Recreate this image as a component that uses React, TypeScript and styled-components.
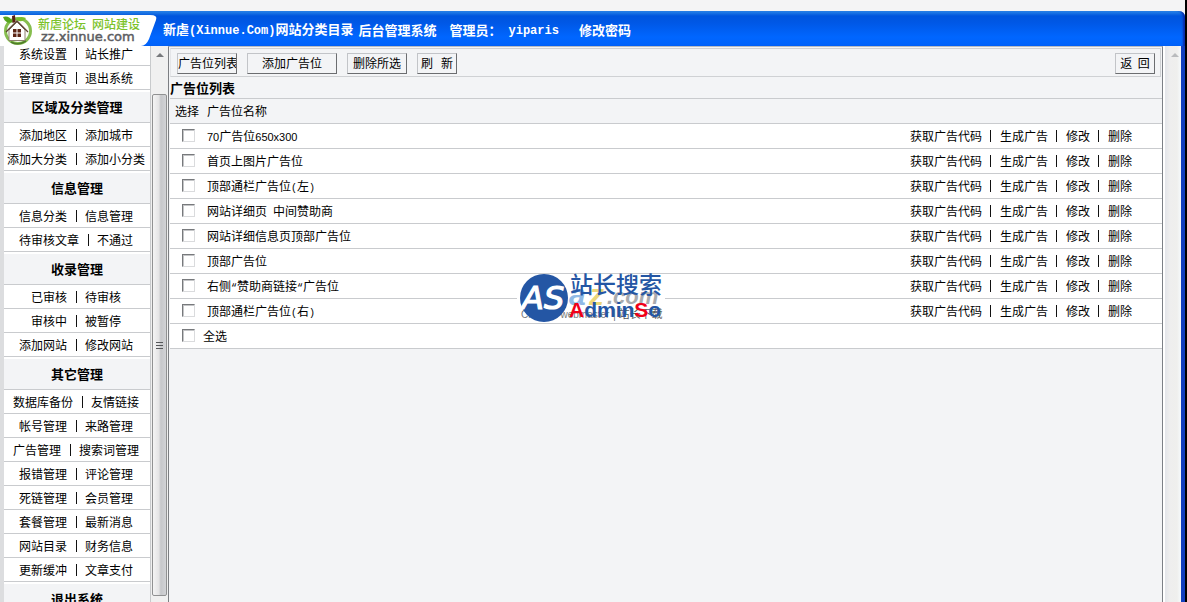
import React from "react";
import styled, { createGlobalStyle, css } from "styled-components";

const GlobalStyle = createGlobalStyle`
  *, *::before, *::after { box-sizing: border-box; }
  body {
    margin: 0;
    background: #f3f4f6;
    color: #000;
    font: 12px/16px "Noto Sans CJK SC", "Liberation Sans", sans-serif;
    overflow: hidden;
  }
  a { color: inherit; text-decoration: none; }
`;

const Screen = styled.div`
  display: flex;
  height: 100vh;
  background: #000;
  padding-right: 2px;
`;

const Frame = styled.div`
  flex: 1;
  min-width: 0;
  display: flex;
  flex-direction: column;
  background: #f3f4f6;
`;

const TopStrip = styled.div`
  flex: none;
  height: 11px;
  background: #f4f4f5;
`;

const Header = styled.header`
  flex: none;
  display: flex;
  align-items: flex-end;
  height: 35px;
  border-top-right-radius: 6px;
  background: linear-gradient(#2a86e8 0, #0055dd 5px, #0058e6 12px, #0066ff 26px, #0062fa 100%);
  box-shadow: inset -3px 0 2px -1px #0a2ca8;
`;

const Brand = styled.a`
  flex: none;
  width: 158px;
  height: 32px;
  svg { display: block; }
`;

const HeaderText = styled.div`
  display: flex;
  align-items: center;
  height: 32px;
  margin-left: 5px;
  color: #fff;
  font-size: 13px;
  font-weight: 700;
  white-space: pre;
`;

const HeaderLatin = styled.span`
  font: 700 12px/16px "Liberation Mono", monospace;
`;

const HeaderItem = styled.span<{ $gap: number }>`
  margin-left: ${(p) => p.$gap}px;
`;

const Body = styled.div`
  flex: 1;
  min-height: 0;
  display: flex;
  border-right: 4px solid #123fbe;
`;

const Sidebar = styled.nav`
  flex: none;
  width: 151px;
  overflow: hidden;
  border-left: 4px solid #dcdddf;
  border-right: 1px solid #c8cacc;
  background: #fff;
`;

const MenuList = styled.div`
  margin-top: -4px;
`;

const line = css`border-bottom: 1px solid #c9cbce;`;

const MenuRow = styled.div`
  ${line}
  height: 24px;
  display: flex;
  justify-content: center;
  align-items: center;
  padding-right: 2px;
  white-space: nowrap;
  background: #fff;
`;

const MenuHeading = styled.h2`
  ${line}
  margin: 0;
  height: 33px;
  display: flex;
  justify-content: center;
  align-items: center;
  border-top: 2px solid #fff;
  background: #f3f4f6;
  font-size: 13px;
  font-weight: 700;
`;

const Bar = styled.span`
  display: inline-flex;
  justify-content: center;
  width: 18px;
  &::before {
    content: "";
    width: 1px;
    height: 12px;
    background: #111;
  }
`;

const SideScroll = styled.div`
  flex: none;
  width: 17px;
  padding: 0 1px 6px;
  display: flex;
  flex-direction: column;
  background: #f0f0f0;
`;

const ArrowUp = styled.span<{ $color: string }>`
  align-self: center;
  margin-top: 7px;
  border: 4px solid transparent;
  border-top: 0;
  border-bottom: 4px solid ${(p) => p.$color};
`;

const Thumb = styled.div`
  flex: 1;
  margin-top: 37px;
  display: flex;
  flex-direction: column;
  align-items: center;
  justify-content: center;
  gap: 2px;
  border: 1px solid #909192;
  border-radius: 2px;
  background: linear-gradient(90deg, #f4f4f4, #e4e4e5 45%, #c6c7ca 60%, #d2d3d6);
`;

const Grip = styled.i`
  width: 7px;
  height: 1px;
  background: #55575a;
`;

const Main = styled.main`
  flex: 1;
  min-width: 0;
  padding: 1px 0 0 1px;
  border-left: 1px solid #7c7e82;
  border-right: 1px solid #7c8086;
  border-top: 1px solid #b8bcc2;
  background: #f3f4f6;
`;

const Toolbar = styled.div`
  display: flex;
  gap: 10px;
  height: 29px;
  margin-right: 1px;
  padding: 4px 5px 3px 6px;
  border: 1px solid #cfd1d4;
  border-left-color: #e4e5e8;
`;

const ToolButton = styled.button<{ $width: number; $end?: boolean }>`
  width: ${(p) => p.$width}px;
  height: 21px;
  margin: 0 0 0 ${(p) => (p.$end ? "auto" : "0")};
  padding: 0 0 2px;
  overflow: hidden;
  border: 1px solid;
  border-color: #c2c4c8 #6b6d70 #6b6d70 #c2c4c8;
  background: #f3f4f6;
  color: #000;
  font: inherit;
  white-space: pre;
`;

const Table = styled.table`
  width: 100%;
  border-collapse: collapse;
  table-layout: fixed;
  caption {
    height: 22px;
    padding-top: 3px;
    ${line}
    text-align: left;
    font-size: 13px;
    font-weight: 700;
  }
`;

const Row = styled.tr<{ $plain?: boolean }>`
  height: ${(p) => (p.$plain ? 24 : 25)}px;
  ${line}
  background: ${(p) => (p.$plain ? "#f3f4f6" : "#fff")};
`;

const Cell = styled.td<{ $end?: boolean }>`
  padding: 0 ${(p) => (p.$end ? 30 : 0)}px 0 0;
  text-align: ${(p) => (p.$end ? "right" : "left")};
  white-space: nowrap;
`;

const CheckCell = styled(Cell)`
  padding-left: 12px;
`;

const HeadCell = styled.th`
  padding: 0;
  text-align: left;
  font-weight: 400;
  white-space: nowrap;
`;

const PickHead = styled(HeadCell)`
  padding-left: 5px;
`;

const Actions = styled.div`
  display: flex;
  justify-content: flex-end;
  align-items: center;
`;

const Check = styled.input`
  appearance: none;
  display: block;
  flex: none;
  width: 13px;
  height: 13px;
  margin: 0;
  border: 1px solid;
  border-color: #77797c #dadbdd #dadbdd #77797c;
  background: #fff;
  box-shadow: inset 1px 1px 0 #c4c5c7;
  &:checked { background: #456; }
`;

const AllLabel = styled.label`
  display: flex;
  align-items: center;
  gap: 8px;
`;

const Digits = styled.span`
  font: 11px/1px "Liberation Sans", sans-serif;
`;

const Marks = styled.span`
  font: 10px/1px "Liberation Mono", monospace;
  white-space: pre;
`;

const PageScroll = styled.div`
  flex: none;
  width: 18px;
  padding-left: 4px;
  display: flex;
  flex-direction: column;
  border-left: 2px solid #fff;
  background: linear-gradient(90deg, #e3e5ea, #eeeeee 30%, #efefed 75%, #f6fafc);
`;

const Watermark = styled.div`
  position: absolute;
  left: 517px;
  top: 271px;
  svg { display: block; }
`;

const toolButtons: [string, number][] = [
  ["广告位列表", 60],
  ["添加广告位", 90],
  ["删除所选", 60],
  ["刷   新", 40],
];

type Section = { title?: string; rows: [string, string][] };

const sections: Section[] = [
  { rows: [["系统设置", "站长推广"], ["管理首页", "退出系统"]] },
  { title: "区域及分类管理", rows: [["添加地区", "添加城市"], ["添加大分类", "添加小分类"]] },
  { title: "信息管理", rows: [["信息分类", "信息管理"], ["待审核文章", "不通过"]] },
  { title: "收录管理", rows: [["已审核", "待审核"], ["审核中", "被暂停"], ["添加网站", "修改网站"]] },
  {
    title: "其它管理",
    rows: [
      ["数据库备份", "友情链接"],
      ["帐号管理", "来路管理"],
      ["广告管理", "搜索词管理"],
      ["报错管理", "评论管理"],
      ["死链管理", "会员管理"],
      ["套餐管理", "最新消息"],
      ["网站目录", "财务信息"],
      ["更新缓冲", "文章支付"],
    ],
  },
  { title: "退出系统", rows: [] },
];

const slots = [
  "70广告位650x300",
  "首页上图片广告位",
  "顶部通栏广告位(左)",
  "网站详细页 中间赞助商",
  "网站详细信息页顶部广告位",
  "顶部广告位",
  "右侧“赞助商链接“广告位",
  "顶部通栏广告位(右)",
];

const actions = ["获取广告代码", "生成广告", "修改", "删除"];

function SlotName({ text }: { text: string }) {
  return (
    <>
      {text.split(/([0-9a-z]+|[ ()“])/).map((part, i) => {
        if (/^[0-9a-z]+$/.test(part)) return <Digits key={i}>{part}</Digits>;
        if (/^[ ()“]$/.test(part)) return <Marks key={i}>{part}</Marks>;
        return part;
      })}
    </>
  );
}

function BrandLogo() {
  return (
    <svg width="158" height="32" viewBox="0 0 158 32" role="img" aria-label="新虐论坛">
      <path d="M0 1 H150 Q158 1 156 6 L149 25 Q146 32 141 32 H0 Z" fill="#fff" />
      <circle cx="18" cy="17" r="12.500" fill="#fbfdf7" stroke="#86bd4e" strokeWidth="3" />
      <path d="M11 28 Q18 32 26 27" fill="none" stroke="#4f7d2a" strokeWidth="1.500" />
      <path d="M3 3 Q9 1 13 8 Q6 11 3 3Z" fill="#57a51d" />
      <path d="M15 6 Q19 1 26 4 Q23 9 15 6Z" fill="#79bd2c" />
      <path d="M12.500 9 L12 2 L15 1 L15.500 8Z" fill="#5c2014" />
      <path d="M9 16 V26.500 H25 V16 L17 8 Z" fill="#fff" stroke="#8d8070" />
      <path d="M6 18 L17 7 L28 18" fill="none" stroke="#5d4434" strokeWidth="1.300" />
      <path d="M13 15 H16.500 V18.500 H13 Z M17.500 15 H21 V18.500 H17.500 Z M13 19.500 H16.500 V23 H13 Z M17.500 19.500 H21 V23 H17.500 Z" fill="#5c2616" />
      <text x="38" y="15" fontSize="12" fontWeight="500" fill="#7cc22a" fontFamily="Noto Sans CJK SC, sans-serif">新虐论坛</text>
      <text x="92" y="15" fontSize="12" fontWeight="500" fill="#7cc22a" fontFamily="Noto Sans CJK SC, sans-serif">网站建设</text>
      <text x="41" y="27" fontSize="13" fill="#5c5d62" stroke="#5c5d62" strokeWidth="0.500" fontFamily="DejaVu Sans, sans-serif">zz.xinnue.com</text>
    </svg>
  );
}

function AdminSoMark() {
  return (
    <svg width="148" height="52" viewBox="0 0 148 52" role="img" aria-label="站长搜索 AdminSo">
      <rect y="3" width="148" height="49" fill="#fff" />
      <text x="4" y="47" fontSize="10" fill="#77797c" fontFamily="Liberation Sans, Noto Sans CJK SC, sans-serif">Chinese webmaster</text>
      <text x="96" y="47" fontSize="11" fill="#55575a" fontFamily="Noto Sans CJK SC, sans-serif">| 站长下载</text>
      <g fontFamily="Liberation Sans, sans-serif" fontWeight="700" fontStyle="italic">
        <text x="52" y="34" fontSize="30" fill="#8fb9e6">a</text>
        <text x="72" y="34" fontSize="30" fill="#ecd778">z</text>
        <text x="90" y="33" fontSize="22" fill="#a9abae">.com</text>
      </g>
      <circle cx="27" cy="27" r="24" fill="#2456a4" />
      <text x="5" y="38" fontSize="32" fontStyle="italic" fill="#fff" stroke="#fff" strokeWidth="1.200" fontFamily="DejaVu Sans, sans-serif">AS</text>
      <text x="53" y="22" fontSize="23" fontWeight="500" fill="#2456a4" fontFamily="Noto Sans CJK SC, sans-serif">站长搜索</text>
      <text x="52" y="46" fontSize="21" fontWeight="700" fill="#2456a4" fontFamily="Liberation Sans, sans-serif">
        <tspan fill="#f00018">A</tspan>dmin<tspan fill="#f00018">S</tspan>o
      </text>
    </svg>
  );
}

export default function App() {
  return (
    <>
      <GlobalStyle />
      <Screen>
        <Frame>
          <TopStrip />
          <Header>
            <Brand href="#home"><BrandLogo /></Brand>
            <HeaderText>
              <span>新虐<HeaderLatin>(Xinnue.Com)</HeaderLatin>网站分类目录</span>
              <HeaderItem $gap={5}>后台管理系统</HeaderItem>
              <HeaderItem $gap={13}>管理员：</HeaderItem>
              <HeaderItem $gap={7}><HeaderLatin>yiparis</HeaderLatin></HeaderItem>
              <HeaderItem $gap={20}><a href="#password">修改密码</a></HeaderItem>
            </HeaderText>
          </Header>
          <Body>
            <Sidebar>
              <MenuList>
                {sections.map((section, i) => (
                  <React.Fragment key={i}>
                    {section.title && <MenuHeading>{section.title}</MenuHeading>}
                    {section.rows.map(([a, b]) => (
                      <MenuRow key={a}>
                        <a href="#menu">{a}</a>
                        <Bar />
                        <a href="#menu">{b}</a>
                      </MenuRow>
                    ))}
                  </React.Fragment>
                ))}
              </MenuList>
            </Sidebar>
            <SideScroll>
              <ArrowUp $color="#77797c" />
              <Thumb><Grip /><Grip /><Grip /></Thumb>
            </SideScroll>
            <Main>
              <Toolbar>
                {toolButtons.map(([label, width]) => (
                  <ToolButton key={label} type="button" $width={width}>{label}</ToolButton>
                ))}
                <ToolButton type="button" $width={40} $end>返  回</ToolButton>
              </Toolbar>
              <Table>
                <caption>广告位列表</caption>
                <colgroup>
                  <col style={{ width: 37 }} />
                  <col />
                  <col style={{ width: 300 }} />
                </colgroup>
                <thead>
                  <Row $plain>
                    <PickHead scope="col">选择</PickHead>
                    <HeadCell scope="col">广告位名称</HeadCell>
                    <HeadCell />
                  </Row>
                </thead>
                <tbody>
                  {slots.map((name) => (
                    <Row key={name}>
                      <CheckCell><Check type="checkbox" aria-label={name} /></CheckCell>
                      <Cell><SlotName text={name} /></Cell>
                      <Cell $end>
                        <Actions>
                          {actions.map((action, i) => (
                            <React.Fragment key={action}>
                              {i > 0 && <Bar />}
                              <a href="#action">{action}</a>
                            </React.Fragment>
                          ))}
                        </Actions>
                      </Cell>
                    </Row>
                  ))}
                  <Row>
                    <CheckCell colSpan={3}>
                      <AllLabel><Check type="checkbox" />全选</AllLabel>
                    </CheckCell>
                  </Row>
                </tbody>
              </Table>
            </Main>
            <PageScroll>
              <ArrowUp $color="#b9bbbd" />
            </PageScroll>
          </Body>
        </Frame>
      </Screen>
      <Watermark><AdminSoMark /></Watermark>
    </>
  );
}
